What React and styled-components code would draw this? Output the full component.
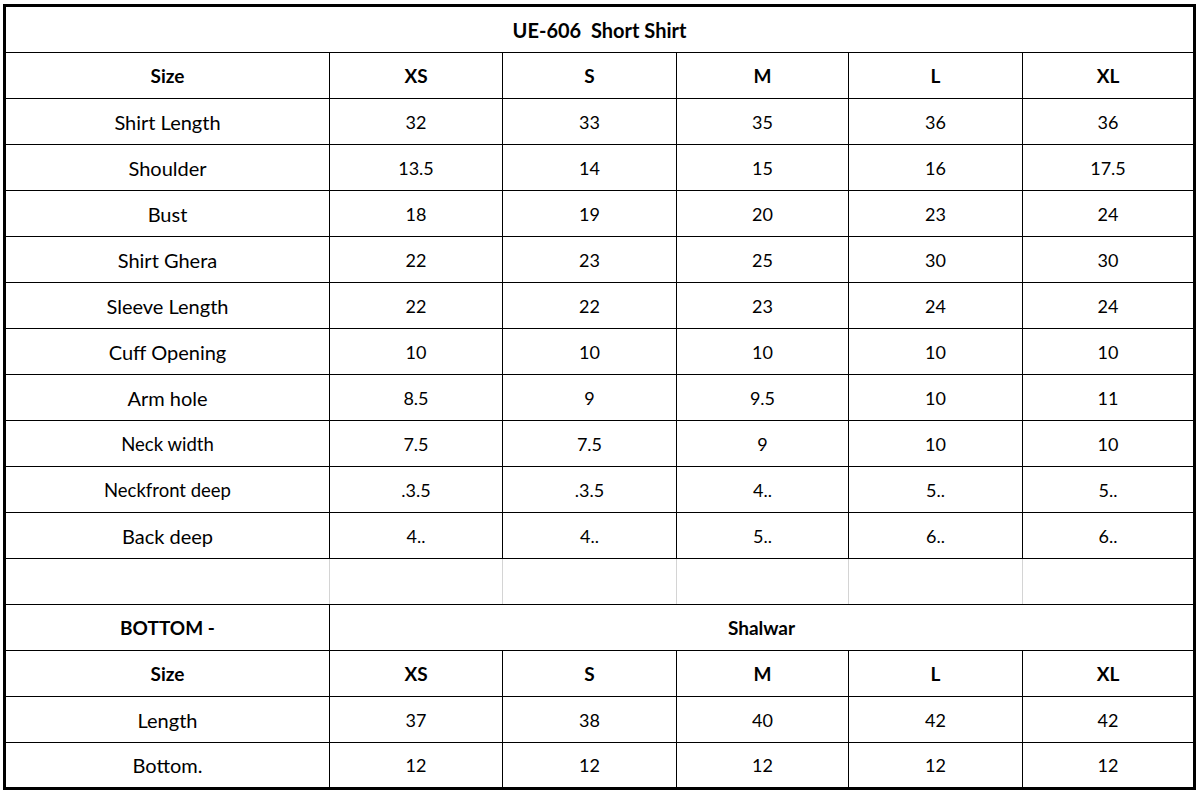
import styled, { createGlobalStyle } from "styled-components";

const GlobalStyle = createGlobalStyle`
  body {
    margin: 0;
    background: #fff;
    font-family: Lato, "Open Sans", "Noto Sans", sans-serif;
    color: #000;
  }
`;

const sizes = ["XS", "S", "M", "L", "XL"];

const shirtRows = [
  { label: "Shirt Length", values: ["32", "33", "35", "36", "36"] },
  { label: "Shoulder", values: ["13.5", "14", "15", "16", "17.5"] },
  { label: "Bust", values: ["18", "19", "20", "23", "24"] },
  { label: "Shirt Ghera", values: ["22", "23", "25", "30", "30"] },
  { label: "Sleeve Length", values: ["22", "22", "23", "24", "24"] },
  { label: "Cuff Opening", values: ["10", "10", "10", "10", "10"] },
  { label: "Arm hole", values: ["8.5", "9", "9.5", "10", "11"] },
  { label: "Neck width", values: ["7.5", "7.5", "9", "10", "10"], small: true },
  { label: "Neckfront deep", values: [".3.5", ".3.5", "4..", "5..", "5.."], small: true },
  { label: "Back deep", values: ["4..", "4..", "5..", "6..", "6.."] },
];

const bottomRows = [
  { label: "Length", values: ["37", "38", "40", "42", "42"] },
  { label: "Bottom.", values: ["12", "12", "12", "12", "12"] },
];

export default function App() {
  return (
    <Sheet>
      <GlobalStyle />
      <SizeTable>
        <colgroup>
          <col style={{ width: 325 }} />
          <col style={{ width: 173 }} />
          <col style={{ width: 174 }} />
          <col style={{ width: 172 }} />
          <col style={{ width: 174 }} />
          <col style={{ width: 172 }} />
        </colgroup>
        <tbody>
          <TitleRow>
            <HeadCell colSpan={6} $big>
              UE-606&nbsp;&nbsp;Short Shirt
            </HeadCell>
          </TitleRow>
          <Row>
            <HeadCell>Size</HeadCell>
            {sizes.map((s) => (
              <HeadCell key={s}>{s}</HeadCell>
            ))}
          </Row>
          {shirtRows.map((r) => (
            <Row key={r.label}>
              <LabelCell $small={r.small}>{r.label}</LabelCell>
              {r.values.map((v, i) => (
                <ValueCell key={i}>{v}</ValueCell>
              ))}
            </Row>
          ))}
          <Row>
            <SpacerCell />
            {sizes.map((s) => (
              <SpacerCell key={s} />
            ))}
          </Row>
          <Row>
            <HeadCell>BOTTOM -</HeadCell>
            <HeadCell colSpan={5}>Shalwar</HeadCell>
          </Row>
          <Row>
            <HeadCell>Size</HeadCell>
            {sizes.map((s) => (
              <HeadCell key={s}>{s}</HeadCell>
            ))}
          </Row>
          {bottomRows.map((r) => (
            <Row key={r.label}>
              <LabelCell>{r.label}</LabelCell>
              {r.values.map((v, i) => (
                <ValueCell key={i}>{v}</ValueCell>
              ))}
            </Row>
          ))}
        </tbody>
      </SizeTable>
    </Sheet>
  );
}

const Sheet = styled.div`
  padding: 4px 0 0 3px;
  border-top: 1px solid #e4e4e4;
  margin-top: -1px;
`;

const SizeTable = styled.table`
  border-collapse: collapse;
  table-layout: fixed;
  width: 1191px;
  border: 3px solid #000;
`;

const Row = styled.tr`
  height: 46px;
`;

const TitleRow = styled.tr`
  height: 47px;
`;

const Cell = styled.td`
  border: 1.5px solid #000;
  padding: 0 4px;
  text-align: center;
  vertical-align: middle;
  white-space: nowrap;
`;

const HeadCell = styled(Cell)`
  font-weight: 700;
  font-size: ${(p) => (p.$big ? "20px" : "19px")};
`;

const LabelCell = styled(Cell)`
  font-size: ${(p) => (p.$small ? "18.5px" : "20px")};
`;

const ValueCell = styled(Cell)`
  font-size: 18px;
`;

const SpacerCell = styled(Cell)`
  border-left-color: #d4d4d4;
  border-right-color: #d4d4d4;

  &:first-child {
    border-left-color: #000;
  }
  &:last-child {
    border-right-color: #000;
  }
`;
